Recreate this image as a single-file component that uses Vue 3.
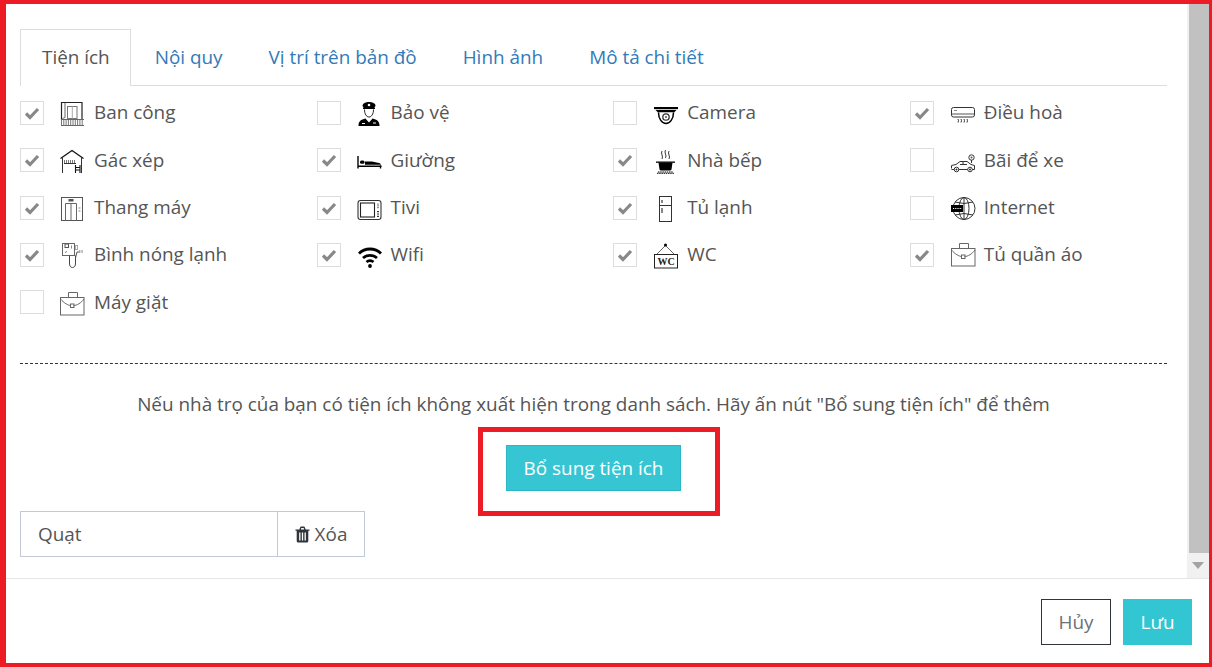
<script setup>
const tabs = ['Tiện ích', 'Nội quy', 'Vị trí trên bản đồ', 'Hình ảnh', 'Mô tả chi tiết']

const briefcase = (dx, dy) => `<g transform="translate(${dx} ${dy})" fill="none" stroke="#666" stroke-width="1"><path d="M8.5 7V2.5H17.5V7"/><rect x="0.5" y="7.5" width="23.5" height="17.5"/><path d="M0.5 9C4 13 8 15.5 11 15.5M13.5 15.5C17 15.5 21 13 24 9"/><rect x="10.5" y="14" width="3.5" height="3.5"/></g>`

const icons = {
  balcony: `<g fill="none"><path d="M1.5 19V1.5H22V18" stroke="#222" stroke-width="1.2"/><path d="M1.5 19Q3 16.5 5 16.5V2" stroke="#666"/><rect x="7.5" y="5.5" width="9.5" height="12" stroke="#777"/><path d="M12.3 5.5V17.5" stroke="#aaa"/><path d="M1 18.5H24M1 24.5H24" stroke="#666"/><path d="M1 21.5H24" stroke="#777" stroke-width="5" stroke-dasharray="1 1.3"/></g>`,
  guard: `<path d="M5.500 5C5.500 2 9 1 12 1S18.500 2 18.500 5L17 7H7Z" fill="#000"/><circle cx="12" cy="4" r="1.300" fill="#fff"/><path d="M6 6.600H18V8H6Z" fill="#000"/><path d="M7.500 8.500C7.500 13 9.500 16 12 16S16.500 13 16.500 8.500" fill="#fff" stroke="#222" stroke-width="1"/><path d="M1.500 25C1.500 20 4 18.500 8.500 17.500L12 20.500L15.500 17.500C20 18.500 22.500 20 22.500 25Z" fill="#000"/><path d="M9 18L12 21.500L15 18" fill="#fff"/><path d="M5 22.500H8M16 22H19" stroke="#fff" stroke-width="1.200"/>`,
  camera: `<path d="M1 6H25V7.500L21 11.500H5L1 7.500Z" fill="#000"/><path d="M2 8.500H24" stroke="#fff" stroke-width=".8"/><path d="M5.500 11.500C5.500 18 9 22.500 13 22.500S20.500 18 20.500 11.500" fill="#fff" stroke="#000" stroke-width="1.500"/><circle cx="13" cy="16" r="3.200" fill="#fff" stroke="#333" stroke-width="1.300"/><circle cx="13" cy="16" r="1" fill="#555"/>`,
  ac: `<g fill="none" stroke="#333"><rect x="1.500" y="6.500" width="23" height="9.500" rx="2"/><path d="M1.500 13H24.500" stroke="#555"/><path d="M4 9.500H7" stroke="#888"/><path d="M8 18Q9 19.500 8 21.500M11 18Q12 19.500 11 21.500M14 18Q15 19.500 14 21.500M17 18Q18 19.500 17 21.500"/></g>`,
  loft: `<g fill="none"><path d="M0.500 10.500L12 2.500L23.500 10.500" stroke="#111" stroke-width="1.300"/><path d="M2.500 10V25M21.500 10V25" stroke="#333"/><path d="M4 13.500H16" stroke="#777" stroke-width="3" stroke-dasharray="1 1"/><path d="M4 15.500H16" stroke="#333"/><path d="M15.500 17V25M20 17V25M15.500 19.500H20M15.500 22H20" stroke="#111" stroke-width="1.100"/></g>`,
  bed: `<path d="M1 8V20.500" stroke="#000" stroke-width="1.400"/><path d="M1 17.500H24.500V19H1Z" fill="#000"/><path d="M23.500 17.500V20.500" stroke="#000" stroke-width="1.400"/><rect x="3" y="12.500" width="4.500" height="3.200" rx="1.500" fill="#000"/><path d="M8 13.500L15 13.500L23 15.300L24 16.700H8Z" fill="#000"/>`,
  kitchen: `<g fill="none" stroke="#222" stroke-width=".9"><path d="M9 3Q8 5 9 7T9 11M12.500 2Q11.500 4 12.500 6T12.500 10M16 3Q15 5 16 7T16 11"/></g><path d="M3 13.500H22V14.800H3Z" fill="#000"/><path d="M5.500 14.500H19.500L18.500 21.500Q18.300 22.500 17 22.500H8Q6.700 22.500 6.500 21.500Z" fill="#000"/><path d="M5 24H20M4 25.300H21" stroke="#000" stroke-dasharray="1.500 .7"/>`,
  parking: `<g fill="none" stroke="#333"><path d="M1.500 20.500V17.500L6 16.500L10 13.500H17L21 16.500L24.500 17.500V21.500H1.500"/><circle cx="6.500" cy="21.500" r="2.300" fill="#fff"/><circle cx="20" cy="21.500" r="2.300" fill="#fff"/><path d="M10 16.500H17M13 14V16.500"/><path d="M21.500 15V12"/><circle cx="21.500" cy="9.500" r="2.700"/></g><circle cx="21.500" cy="9.500" r="1" fill="#555"/><circle cx="6.500" cy="21.500" r="1" fill="#333"/><circle cx="20" cy="21.500" r="1" fill="#333"/>`,
  lift: `<g fill="none" stroke="#555"><rect x="1.500" y="1.500" width="21" height="23"/><path d="M5.500 24.500V7.500H16.500V24.500M11 7.500V24.500" stroke="#666"/><path d="M18.500 12H20.500M18.500 15H20.500" stroke="#888"/></g><rect x="8.500" y="3" width="5" height="2.500" fill="#555"/>`,
  tv: `<g fill="none"><rect x="1" y="4.500" width="23" height="19" rx="2.500" stroke="#333" stroke-width="1.100"/><rect x="3.500" y="7" width="14" height="14" stroke="#222" stroke-width="1.100"/></g><path d="M21 7.500V13" stroke="#999" stroke-width="2" stroke-dasharray="1.200 .6"/><path d="M21 15V21" stroke="#333" stroke-width="2" stroke-dasharray="1.200 1.200"/>`,
  fridge: `<g fill="none" stroke="#333"><rect x="6.500" y="0.500" width="12" height="25"/><path d="M6.500 9.500H18.500"/><path d="M9 4V7M9 12V17" stroke="#111"/></g>`,
  globe: `<g fill="none" stroke="#333"><circle cx="14" cy="12.500" r="11"/><ellipse cx="14" cy="12.500" rx="5" ry="11"/><path d="M14 1.500V23.500M5 6Q14 9 23 6M5 19Q14 16 23 19"/></g><rect x="1" y="9" width="12" height="7" fill="#000"/><path d="M3 12.500H12" stroke="#fff" stroke-width="1.200" stroke-dasharray="1 .8"/>`,
  heater: `<g fill="none" stroke="#666"><rect x="2.500" y="0.500" width="12" height="12"/><rect x="5" y="1" width="3.500" height="3.500" stroke="#555"/><path d="M11.500 2.500V5.500M5 9.500L7 8.500" stroke="#888"/><rect x="15.500" y="2.500" width="2" height="4" stroke="#aaa"/><path d="M15.500 12.500V20Q15.500 24.500 12.500 24.500T9.500 20V12.500" stroke="#444"/><path d="M15.500 15L17 9H19" stroke="#555"/></g><path d="M19 8.500H23" stroke="#aaa" stroke-width="3" stroke-dasharray="1 .6"/>`,
  wifi: `<g fill="none" stroke="#000" stroke-width="2.800"><path d="M2 10.500C8 4.500 18 4.500 24 10.500"/><path d="M6 15C10 11.500 16 11.500 20 15"/><path d="M9.500 19C11.500 17.300 14.500 17.300 16.500 19"/></g><circle cx="13" cy="23" r="1.900" fill="#000"/>`,
  wc: `<g fill="none" stroke="#222"><path d="M3.500 11.500L12.500 2.500L21.500 11.500" stroke="#666"/><rect x="1.500" y="11.500" width="23" height="13.500"/></g><circle cx="12.500" cy="2" r="1.500" fill="#000"/><text x="13" y="22" text-anchor="middle" font-family="Liberation Serif, serif" font-size="10" font-weight="700" fill="#222">WC</text>`,
  wardrobe: briefcase(1, -2),
  washer: briefcase(0, 0),
}

const rows = [
  ['Ban công', true, 'balcony'], ['Bảo vệ', false, 'guard'], ['Camera', false, 'camera'], ['Điều hoà', true, 'ac'],
  ['Gác xép', true, 'loft'], ['Giường', true, 'bed'], ['Nhà bếp', true, 'kitchen'], ['Bãi để xe', false, 'parking'],
  ['Thang máy', true, 'lift'], ['Tivi', true, 'tv'], ['Tủ lạnh', true, 'fridge'], ['Internet', false, 'globe'],
  ['Bình nóng lạnh', true, 'heater'], ['Wifi', true, 'wifi'], ['WC', true, 'wc'], ['Tủ quần áo', true, 'wardrobe'],
  ['Máy giặt', false, 'washer'],
]
</script>

<template>
  <div class="frame">
    <div class="body">
      <div class="content">
        <ul class="tabs">
          <li v-for="(t, i) in tabs" :key="t" class="tab" :class="{ active: i === 0 }">{{ t }}</li>
        </ul>
        <div class="grid">
          <label v-for="r in rows" :key="r[0]" class="item">
            <span class="box">
              <svg v-if="r[1]" width="16" height="14" viewBox="0 0 16 14">
                <path d="M2 7.500L6 11.500L14 3" fill="none" stroke="#888" stroke-width="3.200" />
              </svg>
            </span>
            <svg class="icon" width="26" height="26" viewBox="0 0 26 26" v-html="icons[r[2]]"></svg>
            <span class="name">{{ r[0] }}</span>
          </label>
        </div>
        <div class="rule"></div>
        <p class="hint">Nếu nhà trọ của bạn có tiện ích không xuất hiện trong danh sách. Hãy ấn nút "Bổ sung tiện ích" để thêm</p>
        <div class="add-wrap">
          <button class="add">Bổ sung tiện ích<span class="mark"></span></button>
        </div>
        <div class="extra">
          <div class="field">Quạt</div>
          <button class="remove">
            <svg width="15" height="17" viewBox="0 0 15 17">
              <path d="M.5 3.500H14.500V4.800H13.300V15Q13.300 16.500 11.800 16.500H3.200Q1.700 16.500 1.700 15V4.800H.5ZM4.300 3.500L5.300 1Q5.500 .5 6 .5H9Q9.500 .5 9.700 1L10.700 3.500H9.200L8.600 1.900H6.400L5.800 3.500Z" fill="#2f353b" />
              <path d="M4.800 6.500V14.500M7.500 6.500V14.500M10.200 6.500V14.500" stroke="#fff" stroke-width="1.300" />
            </svg>
            Xóa
          </button>
        </div>
      </div>
      <div class="scrollbar">
        <div class="thumb"></div>
        <div class="arrow"></div>
      </div>
    </div>
    <div class="footer">
      <button class="cancel">Hủy</button>
      <button class="save">Lưu</button>
    </div>
  </div>
</template>

<style scoped>
.frame {
  box-sizing: border-box;
  height: 667px;
  border-style: solid;
  border-color: #ed1c24;
  border-width: 4px 3px 4px 6px;
  display: flex;
  flex-direction: column;
  background: #fff;
  font-family: "Open Sans", sans-serif;
  font-size: 18.9px;
  color: #555;
}
.body {
  display: flex;
  border-bottom: 1px solid #e5e5e5;
  box-sizing: border-box;
  flex: none;
  height: 575px;
}
.content {
  flex: 1;
  min-width: 0;
  padding: 25px 20px 0 14px;
}
.tabs {
  list-style: none;
  margin: 0;
  padding: 0;
  display: flex;
  height: 57px;
  box-sizing: border-box;
  border-bottom: 1px solid #ddd;
}
.tab {
  box-sizing: border-box;
  height: 57px;
  padding: 15px 21px 0;
  margin-right: 2px;
  line-height: 25px;
  color: #337ab7;
  border: 1px solid transparent;
  border-bottom: 0;
}
.tab.active {
  color: #555;
  background: #fff;
  border-color: #ddd;
  padding-left: 21px;
  padding-right: 20px;
}
.grid {
  display: grid;
  grid-template-columns: repeat(4, 296.6px);
  grid-auto-rows: 47.33px;
  margin-top: 15px;
  width: 1187px;
  height: 236px;
}
.item {
  display: flex;
  align-items: flex-start;
}
.box {
  box-sizing: border-box;
  width: 24px;
  height: 24px;
  border: 1px solid #ddd;
  background: #fff;
  display: flex;
  align-items: center;
  justify-content: center;
  flex: none;
}
.icon {
  margin-left: 16px;
  flex: none;
  width: 26px;
  height: 26px;
  overflow: visible;
}
.name {
  margin-left: 8px;
  margin-top: 0.3px;
  line-height: 22px;
}
.rule {
  border-top: 1px dashed #333;
  margin-top: 26px;
}
.hint {
  margin: 28px 0 0;
  text-align: center;
  line-height: 25px;
  white-space: nowrap;
}
.add-wrap {
  display: flex;
  justify-content: center;
  margin-top: 28px;
}
.add {
  position: relative;
  box-sizing: border-box;
  width: 175px;
  height: 46px;
  border: 1px solid #2bb8c4;
  background: #36c6d3;
  color: #fff;
  font: inherit;
  padding: 0;
}
.mark {
  position: absolute;
  left: -29px;
  top: -19px;
  width: 242px;
  height: 89px;
  box-sizing: border-box;
  border: 5px solid #ed1c24;
  pointer-events: none;
}
.extra {
  display: flex;
  margin-top: 20px;
  width: 345px;
  height: 46px;
}
.field {
  box-sizing: border-box;
  width: 258px;
  border: 1px solid #c2cad8;
  padding-left: 17px;
  line-height: 44px;
  color: #555;
}
.remove {
  flex: 1;
  margin-left: -1px;
  border: 1px solid #c2cad8;
  background: #fff;
  color: #555;
  font: inherit;
  padding: 0;
  display: flex;
  align-items: center;
  justify-content: center;
  gap: 5px;
}
.scrollbar {
  width: 22px;
  flex: none;
  background: #f1f1f1;
  display: flex;
  flex-direction: column;
  align-items: flex-end;
}
.thumb {
  width: 20px;
  height: 549px;
  background: #c1c1c1;
}
.arrow {
  align-self: center;
  margin-top: 9px;
  width: 0;
  height: 0;
  border-left: 6px solid transparent;
  border-right: 6px solid transparent;
  border-top: 7px solid #a3a3a3;
}
.footer {
  flex: 1;
  display: flex;
  justify-content: flex-end;
  align-items: flex-start;
  padding: 20px 17px 0 0;
  gap: 12px;
}
.cancel,
.save {
  box-sizing: border-box;
  height: 46px;
  font: inherit;
  padding: 0;
}
.cancel {
  width: 70px;
  background: #fff;
  border: 1px solid #2f353b;
  color: #6c7178;
}
.save {
  width: 69px;
  background: #32c5d2;
  border: 1px solid #32c5d2;
  color: #fff;
}
</style>
